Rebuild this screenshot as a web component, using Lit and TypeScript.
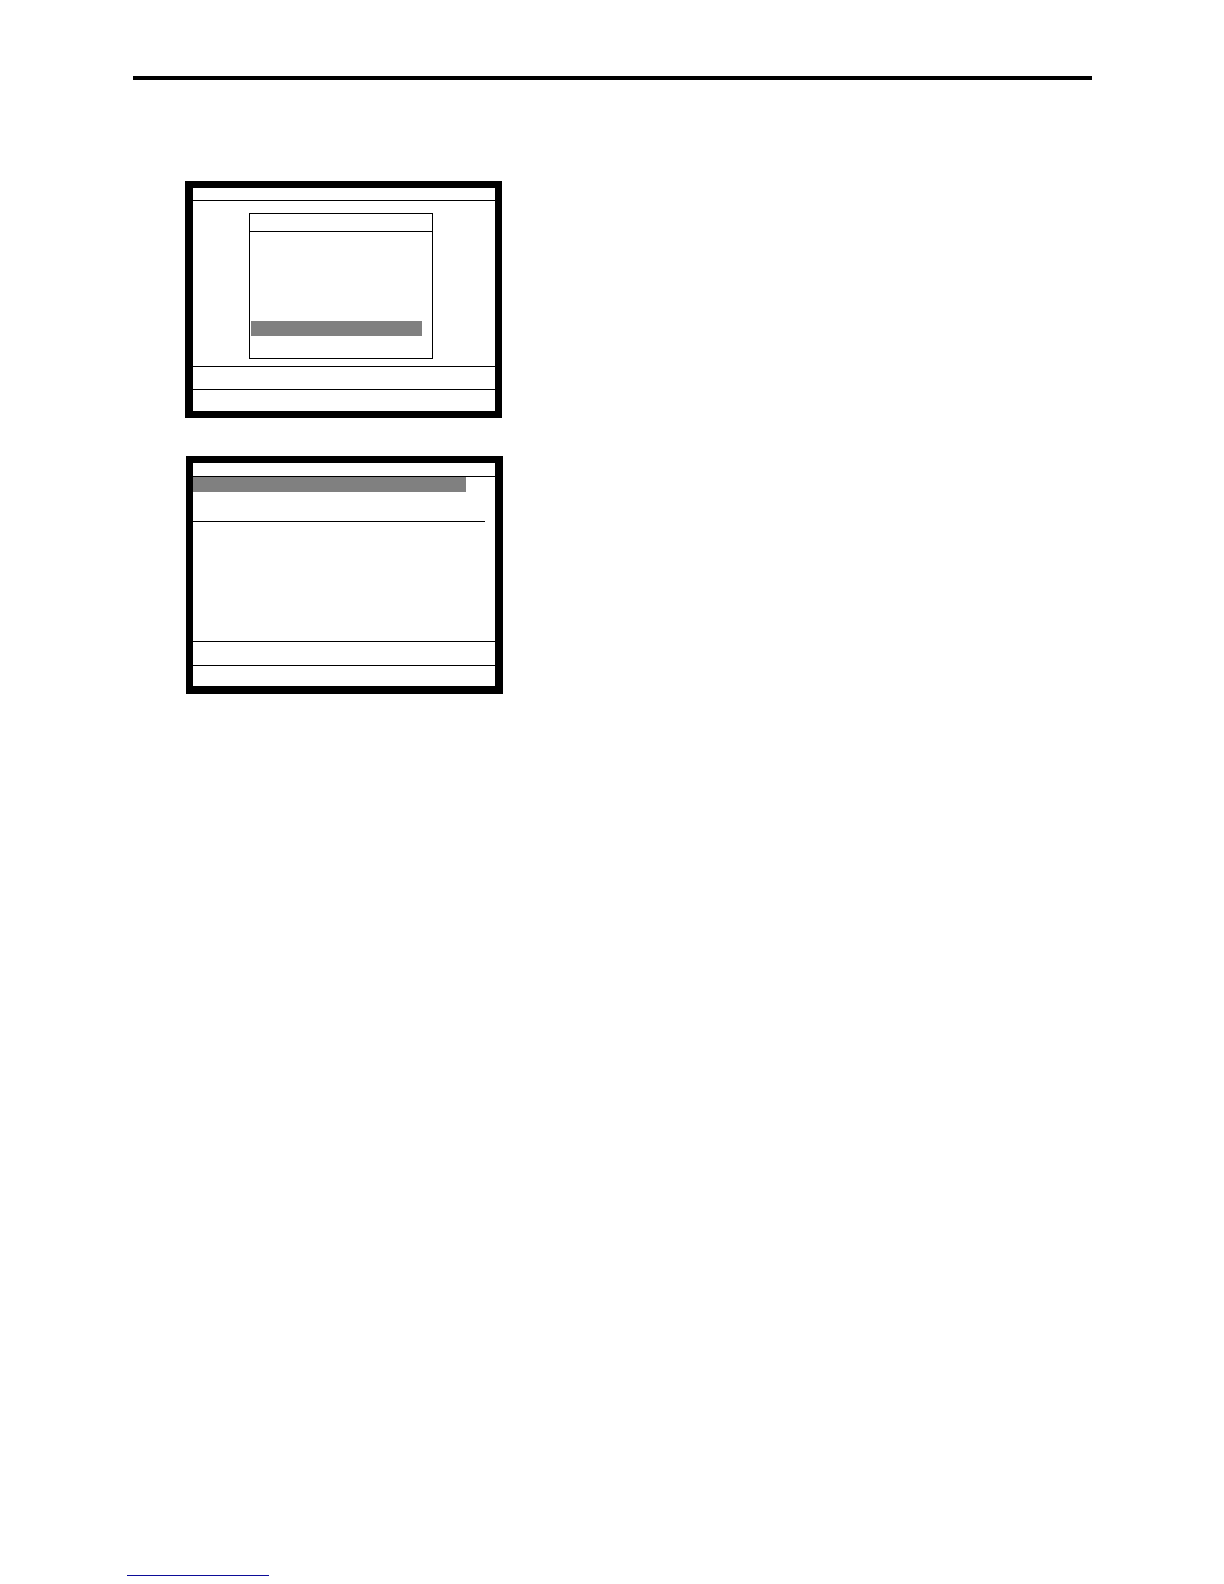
import { LitElement, html, css } from "lit";
import { customElement } from "lit/decorators.js";

@customElement("menu-screen")
class MenuScreen extends LitElement {
  static styles = css`
    :host {
      display: block;
    }
    .screen {
      display: flex;
      flex-direction: column;
      border: 7px solid #000;
      border-left-width: 8px;
      background: #fff;
    }
    .title {
      height: 12px;
      border-bottom: 1px solid #000;
    }
    .body {
      padding: 12px 62px 7px 56px;
    }
    .menu {
      border: 1px solid #000;
    }
    .menu-title {
      height: 17px;
      border-bottom: 1px solid #000;
    }
    .items {
      padding: 89px 10px 22px 1px;
    }
    .selected {
      height: 15px;
      background: #808080;
    }
    .message {
      height: 22px;
      border-top: 1px solid #000;
    }
    .keys {
      height: 21px;
      border-top: 1px solid #000;
    }
  `;

  render() {
    return html`
      <section class="screen">
        <div class="title"></div>
        <div class="body">
          <div class="menu">
            <div class="menu-title"></div>
            <div class="items"><div class="selected"></div></div>
          </div>
        </div>
        <div class="message"></div>
        <div class="keys"></div>
      </section>
    `;
  }
}

@customElement("list-screen")
class ListScreen extends LitElement {
  static styles = css`
    :host {
      display: block;
    }
    .screen {
      display: flex;
      flex-direction: column;
      border: 7px solid #000;
      border-right-width: 8px;
      border-bottom-width: 8px;
      background: #fff;
    }
    .title {
      height: 13px;
      border-bottom: 1px solid #000;
    }
    .selected {
      height: 15px;
      margin-right: 29px;
      background: #808080;
    }
    .heading {
      height: 29px;
      margin-right: 10px;
      border-bottom: 1px solid #000;
    }
    .rows {
      height: 119px;
    }
    .message {
      height: 23px;
      border-top: 1px solid #000;
    }
    .keys {
      height: 20px;
      border-top: 1px solid #000;
    }
  `;

  render() {
    return html`
      <section class="screen">
        <div class="title"></div>
        <div class="selected"></div>
        <div class="heading"></div>
        <div class="rows"></div>
        <div class="message"></div>
        <div class="keys"></div>
      </section>
    `;
  }
}

@customElement("app-root")
class AppRoot extends LitElement {
  static styles = css`
    :host {
      display: block;
      background: #fff;
    }
    .page {
      box-sizing: border-box;
      min-height: 100vh;
      display: flex;
      flex-direction: column;
      padding: 76px 132px 8px 127px;
    }
    .rule {
      height: 4px;
      margin-left: 6px;
      background: #000;
    }
    .screens {
      display: flex;
      flex-direction: column;
      gap: 38px;
      padding: 101px 0 38px 58px;
    }
    .menu-screen {
      width: 100%;
      max-width: 317px;
    }
    .list-screen {
      width: 100%;
      max-width: 317px;
      margin-left: 1px;
    }
    .footer {
      width: 142px;
      margin-top: auto;
      border-bottom: 1px solid #0c0c98;
    }
  `;

  render() {
    return html`
      <main class="page">
        <div class="rule"></div>
        <div class="screens">
          <menu-screen class="menu-screen"></menu-screen>
          <list-screen class="list-screen"></list-screen>
        </div>
        <footer class="footer"></footer>
      </main>
    `;
  }
}
